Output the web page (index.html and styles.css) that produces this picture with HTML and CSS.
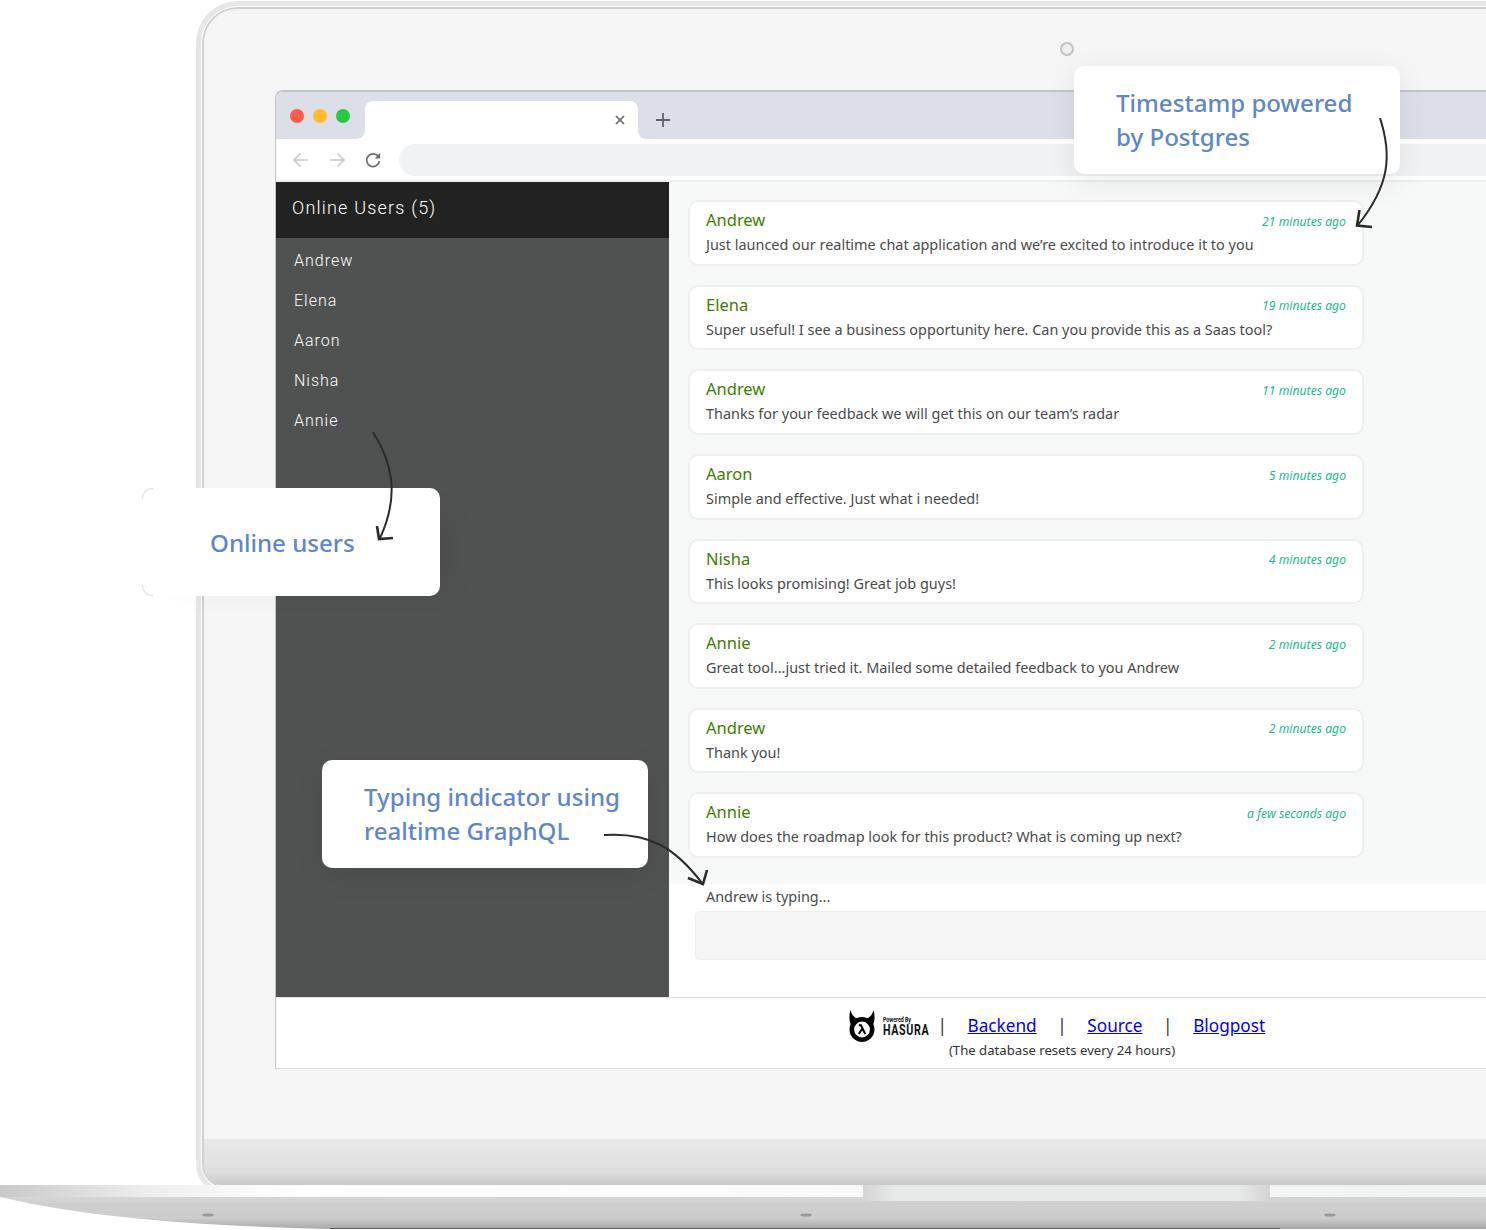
FILE: index.html
```html
<!DOCTYPE html>
<html lang="en">

<head>
    <meta charset="UTF-8">
    <meta name="viewport" content="width=device-width, initial-scale=1.0">
    <title>Realtime chat</title>
    <link rel="stylesheet" href="styles.css">
</head>

<body>
    <div class="stage">
        <div class="lid">
            <div class="display">
                <span class="camera"></span>
                <div class="browser">
                    <div class="tabbar">
                        <div class="lights">
                            <span class="light red"></span>
                            <span class="light yellow"></span>
                            <span class="light green"></span>
                        </div>
                        <div class="tab">
                            <svg class="tab-close" width="12" height="12" viewBox="0 0 12 12">
                                <path d="M2 2l8 8M10 2l-8 8" stroke="#5f6368" stroke-width="1.6" fill="none" />
                            </svg>
                        </div>
                        <svg class="tab-new" width="16" height="16" viewBox="0 0 16 16">
                            <path d="M8 1v14M1 8h14" stroke="#5f6368" stroke-width="1.8" fill="none" />
                        </svg>
                    </div>
                    <div class="toolbar">
                        <svg class="nav-icon" width="18" height="18" viewBox="0 0 18 18">
                            <path d="M16 9H2M8.500 2.500L2 9l6.500 6.500" stroke="#c6c8cb" stroke-width="1.6" fill="none" />
                        </svg>
                        <svg class="nav-icon" width="18" height="18" viewBox="0 0 18 18">
                            <path d="M2 9h14M9.500 2.500L16 9l-6.500 6.500" stroke="#c6c8cb" stroke-width="1.6" fill="none" />
                        </svg>
                        <svg class="nav-icon" width="18" height="18" viewBox="0 0 18 18">
                            <path d="M14.600 6A6.400 6.400 0 1 0 15.400 10" stroke="#6b6e72" stroke-width="1.8" fill="none" />
                            <path d="M16.200 1.800v5.600h-5.600z" fill="#6b6e72" />
                        </svg>
                        <div class="address"></div>
                    </div>
                    <div class="app">
                        <aside class="sidebar">
                            <div class="sidebar-title">Online Users (5)</div>
                            <ul class="user-list">
                                <li>Andrew</li>
                                <li>Elena</li>
                                <li>Aaron</li>
                                <li>Nisha</li>
                                <li>Annie</li>
                            </ul>
                        </aside>
                        <main class="chat">
                            <div class="messages">
                                <div class="message">
                                    <div class="message-head"><span class="name">Andrew</span><span class="time">21 minutes ago</span></div>
                                    <div class="text">Just launced our realtime chat application and we’re excited to introduce it to you</div>
                                </div>
                                <div class="message">
                                    <div class="message-head"><span class="name">Elena</span><span class="time">19 minutes ago</span></div>
                                    <div class="text">Super useful! I see a business opportunity here. Can you provide this as a Saas tool?</div>
                                </div>
                                <div class="message">
                                    <div class="message-head"><span class="name">Andrew</span><span class="time">11 minutes ago</span></div>
                                    <div class="text">Thanks for your feedback we will get this on our team’s radar</div>
                                </div>
                                <div class="message">
                                    <div class="message-head"><span class="name">Aaron</span><span class="time">5 minutes ago</span></div>
                                    <div class="text">Simple and effective. Just what i needed!</div>
                                </div>
                                <div class="message">
                                    <div class="message-head"><span class="name">Nisha</span><span class="time">4 minutes ago</span></div>
                                    <div class="text">This looks promising! Great job guys!</div>
                                </div>
                                <div class="message">
                                    <div class="message-head"><span class="name">Annie</span><span class="time">2 minutes ago</span></div>
                                    <div class="text">Great tool...just tried it. Mailed some detailed feedback to you Andrew</div>
                                </div>
                                <div class="message">
                                    <div class="message-head"><span class="name">Andrew</span><span class="time">2 minutes ago</span></div>
                                    <div class="text">Thank you!</div>
                                </div>
                                <div class="message">
                                    <div class="message-head"><span class="name">Annie</span><span class="time">a few seconds ago</span></div>
                                    <div class="text">How does the roadmap look for this product? What is coming up next?</div>
                                </div>
                            </div>
                            <div class="composer">
                                <div class="typing">Andrew is typing...</div>
                                <div class="chat-input"></div>
                            </div>
                        </main>
                    </div>
                    <footer class="footer">
                        <div class="footer-row">
                            <div class="hasura">
                                <svg width="26" height="32" viewBox="0 0 26 32">
                                    <path d="M1.500 0C0 5 0 10 2 15L10 9C6 8 3 6 1.500 0Z" fill="#000" />
                                    <path d="M24.500 0C26 5 26 10 24 15L16 9C20 8 23 6 24.500 0Z" fill="#000" />
                                    <circle cx="13" cy="19.500" r="10.200" stroke="#000" stroke-width="4.600" fill="#fff" />
                                    <path d="M9.800 15.200h2.200l4.200 8.800M13.200 18.800l-3.400 5.200" stroke="#000" stroke-width="2" fill="none" />
                                </svg>
                                <div class="hasura-text">
                                    <span class="powered">Powered By</span>
                                    <span class="hasura-name">HASURA</span>
                                </div>
                            </div>
                            <span class="pipe">|</span>
                            <a href="#">Backend</a>
                            <span class="pipe">|</span>
                            <a href="#">Source</a>
                            <span class="pipe">|</span>
                            <a href="#">Blogpost</a>
                        </div>
                        <div class="footer-note">(The database resets every 24 hours)</div>
                    </footer>
                </div>
            </div>
            <div class="chin"></div>
        </div>

        <svg class="base" width="1486" height="45" viewBox="0 0 1486 45">
            <defs>
                <linearGradient id="baseTop" x1="0" x2="1" y1="0" y2="0">
                    <stop offset="0" stop-color="#c9c9c9" />
                    <stop offset="0.1" stop-color="#eeeeef" />
                    <stop offset="0.2" stop-color="#ffffff" />
                    <stop offset="0.8" stop-color="#f4f6f5" />
                    <stop offset="1" stop-color="#f0f2f1" />
                </linearGradient>
                <linearGradient id="baseBottom" x1="0" x2="0" y1="0" y2="1">
                    <stop offset="0" stop-color="#d6d6d6" />
                    <stop offset="0.2" stop-color="#cfcfcf" />
                    <stop offset="0.65" stop-color="#cdcdcd" />
                    <stop offset="1" stop-color="#a8a8a8" />
                </linearGradient>
                <linearGradient id="notch" x1="0" x2="1" y1="0" y2="0">
                    <stop offset="0" stop-color="#d4d4d4" />
                    <stop offset="0.08" stop-color="#e8e9e9" />
                    <stop offset="0.92" stop-color="#e8e9e9" />
                    <stop offset="1" stop-color="#d4d4d4" />
                </linearGradient>
            </defs>
            <path d="M0 12H1486V44H330C200 41 90 33 0 12Z" fill="url(#baseBottom)" />
            <path d="M0 0H1486V12H0Z" fill="url(#baseTop)" />
            <path d="M330 43.500H1280" stroke="#5b5b5b" stroke-width="1" />
            <path d="M863 0H1270V12Q1270 16 1258 16H875Q863 16 863 12Z" fill="url(#notch)" />
            <ellipse cx="208" cy="30" rx="6" ry="1.600" fill="#9a9a9a" />
            <ellipse cx="806" cy="30" rx="6" ry="1.600" fill="#9a9a9a" />
            <ellipse cx="1330" cy="30" rx="6" ry="1.600" fill="#9a9a9a" />
        </svg>

        <div class="callout callout-time">Timestamp powered<br>by Postgres</div>
        <div class="callout callout-users">Online users</div>
        <div class="callout callout-typing">Typing indicator using<br>realtime GraphQL</div>

        <svg class="arrows" width="1486" height="1230" viewBox="0 0 1486 1230">
            <g stroke="#2b2b2b" stroke-width="2" fill="none">
                <path d="M1380 118C1392 155 1390 185 1358 225" />
                <path d="M1359.500 210L1357 225.500L1372 227" stroke-width="2.600" />
                <path d="M373 432C392 462 400 495 380 538" />
                <path d="M377 526L379 539L393 538" stroke-width="2.600" />
                <path d="M604 835C650 832 675 848 702 883" />
                <path d="M688 878L703 884L707 870" stroke-width="2.600" />
            </g>
        </svg>
    </div>
</body>

</html>
```

FILE: styles.css
```css
* {
    box-sizing: border-box;
}

body {
    margin: 0;
    background-color: #fff;
    font-family: "Noto Sans", sans-serif;
}

.stage {
    position: relative;
    width: 1486px;
    height: 1230px;
    overflow: hidden;
    background-color: #fff;
}

/* laptop */
.lid {
    display: flex;
    flex-direction: column;
    width: 1700px;
    height: 1177px;
    margin: 9px 0 0 204px;
    overflow: hidden;
    border-radius: 34px 0 0 22px;
    box-shadow: 0 0 0 2px #cfcfcf, 0 0 0 3px #fff, 0 0 0 8px #e6e6e6;
}

.display {
    position: relative;
    flex: 1;
    padding: 81px 0 0 71px;
    background-color: #f5f5f5;
}

.camera {
    position: absolute;
    top: 33px;
    left: 856px;
    width: 14px;
    height: 14px;
    border: 2px solid #c2c2c2;
    border-radius: 50%;
    background-color: #eee;
}

.chin {
    height: 47px;
    background: linear-gradient(#e9e9e9, #dedede 70%, #c9c9c9 96%);
}

.base {
    position: relative;
    display: block;
    margin-top: -1px;
}

/* browser */
.browser {
    width: 1573px;
    height: 979px;
    border-top: 2px solid #c3c5c9;
    border-left: 1px solid #c3c5c9;
    border-radius: 8px 0 0 0;
    background-color: #fff;
}

.tabbar {
    display: flex;
    align-items: flex-end;
    height: 47px;
    background-color: #dcdfe7;
    border-radius: 6px 0 0 0;
}

.lights {
    display: flex;
    align-self: flex-start;
    gap: 9px;
    margin: 17px 15px 0 14px;
}

.light {
    width: 14px;
    height: 14px;
    border-radius: 50%;
}

.red {
    background-color: #ff5a52;
}

.yellow {
    background-color: #ffbc2e;
}

.green {
    background-color: #28c93f;
}

.tab {
    position: relative;
    display: flex;
    align-items: center;
    justify-content: flex-end;
    width: 273px;
    height: 38px;
    padding-right: 12px;
    background-color: #fff;
    border-radius: 8px 8px 0 0;
}

.tab::before,
.tab::after {
    content: "";
    position: absolute;
    bottom: 0;
    width: 8px;
    height: 8px;
}

.tab::before {
    left: -8px;
    background: radial-gradient(circle at 0 0, #dcdfe7 7.500px, #fff 8px);
}

.tab::after {
    right: -8px;
    background: radial-gradient(circle at 100% 0, #dcdfe7 7.500px, #fff 8px);
}

.tab-new {
    align-self: center;
    margin: 8px 0 0 17px;
}

.toolbar {
    display: flex;
    align-items: center;
    gap: 18px;
    height: 41px;
    padding: 0 0 0 16px;
    background-color: #fff;
}

.address {
    flex: 1;
    height: 32px;
    margin: 1px 0 0 -1px;
    background-color: #f1f2f4;
    border-radius: 16px;
}

/* chat app */
.app {
    display: flex;
    height: 817px;
    border-top: 2px solid #eee;
}

.sidebar {
    width: 393px;
    background-color: #505251;
    font-family: Roboto, sans-serif;
    color: #fff;
}

.sidebar-title {
    height: 56px;
    padding-left: 16px;
    background-color: #222;
    font-size: 18px;
    font-weight: 300;
    line-height: 52px;
    letter-spacing: 1.2px;
}

.user-list {
    margin: 0;
    padding: 3px 0 0 18px;
    list-style: none;
    font-size: 16px;
    font-weight: 300;
    line-height: 40px;
    letter-spacing: 1px;
}

.chat {
    flex: 1;
    display: flex;
    flex-direction: column;
}

.messages {
    display: flex;
    flex-direction: column;
    gap: 19px;
    height: 702px;
    padding: 18.300px 0 0 19px;
    background-color: #f7f8f8;
}

.message {
    width: 676px;
    height: 65.600px;
    padding: 7px 16px 0 16px;
    background-color: #fff;
    border: 2px solid #efefef;
    border-radius: 10px;
}

.message-head {
    display: flex;
    align-items: center;
    justify-content: space-between;
}

.name {
    font-size: 16.500px;
    line-height: 22px;
    color: #3f7d00;
}

.time {
    margin-top: 2px;
    font-size: 12.200px;
    font-style: italic;
    color: #1cb991;
}

.text {
    margin-top: 4px;
    font-size: 14.450px;
    line-height: 20px;
    color: #4a4a4a;
}

.composer {
    flex: 1;
    background-color: #fff;
}

.typing {
    padding: 3px 0 0 37px;
    font-size: 14.400px;
    line-height: 20px;
    color: #4a4a4a;
}

.chat-input {
    height: 49px;
    margin: 4px 0 0 26px;
    background-color: #f5f5f5;
    border: 1px solid #eee;
    border-radius: 4px;
}

/* footer */
.footer {
    height: 72px;
    border-top: 1px solid #ddd;
    border-bottom: 1px solid #ddd;
    text-align: center;
}

.footer-row {
    display: flex;
    align-items: center;
    justify-content: center;
    gap: 20.600px;
    height: 43px;
    padding: 12px 10px 0 0;
    font-size: 17.200px;
    color: #333;
}

.footer-row a {
    color: #0000ee;
}

.hasura {
    display: flex;
    align-items: center;
    gap: 8px;
    margin-right: -12px;
}

.hasura-text {
    display: flex;
    flex-direction: column;
    align-items: flex-start;
    width: 46px;
    margin-top: 3px;
    font-family: Roboto, sans-serif;
    font-weight: 700;
    color: #111;
    text-align: left;
}

.powered {
    font-size: 7px;
    line-height: 8px;
    transform: scaleX(0.75);
    transform-origin: left;
    white-space: nowrap;
}

.hasura-name {
    font-size: 14.500px;
    line-height: 14px;
    transform: scaleX(0.74);
    transform-origin: left;
    letter-spacing: 0.8px;
}

.footer-note {
    font-size: 13.150px;
    line-height: 18px;
    color: #333;
}

/* callouts over the page */
.callout {
    position: absolute;
    display: flex;
    align-items: center;
    width: 326px;
    height: 108px;
    padding-left: 42px;
    background-color: #fff;
    border-radius: 10px;
    box-shadow: 0 8px 30px rgba(0, 0, 0, 0.08);
    font-size: 24.100px;
    font-weight: 500;
    line-height: 34px;
    color: #5e86c9;
}

.callout-time {
    top: 66px;
    left: 1074px;
}

.callout-users {
    top: 488px;
    left: 142px;
    width: 298px;
    padding: 2px 0 0 68px;
    box-shadow: 24px 8px 30px -14px rgba(0, 0, 0, 0.06);
}

.callout-users::before,
.callout-users::after {
    content: "";
    position: absolute;
    left: 0;
    width: 10px;
    height: 10px;
    border-left: 1px solid #ddd;
}

.callout-users::before {
    top: 0;
    border-top: 1px solid #ddd;
    border-radius: 10px 0 0 0;
}

.callout-users::after {
    bottom: 0;
    border-bottom: 1px solid #ddd;
    border-radius: 0 0 0 10px;
}

.callout-typing {
    top: 760px;
    left: 322px;
}

.arrows {
    position: absolute;
    top: 0;
    left: 0;
    pointer-events: none;
}
```
